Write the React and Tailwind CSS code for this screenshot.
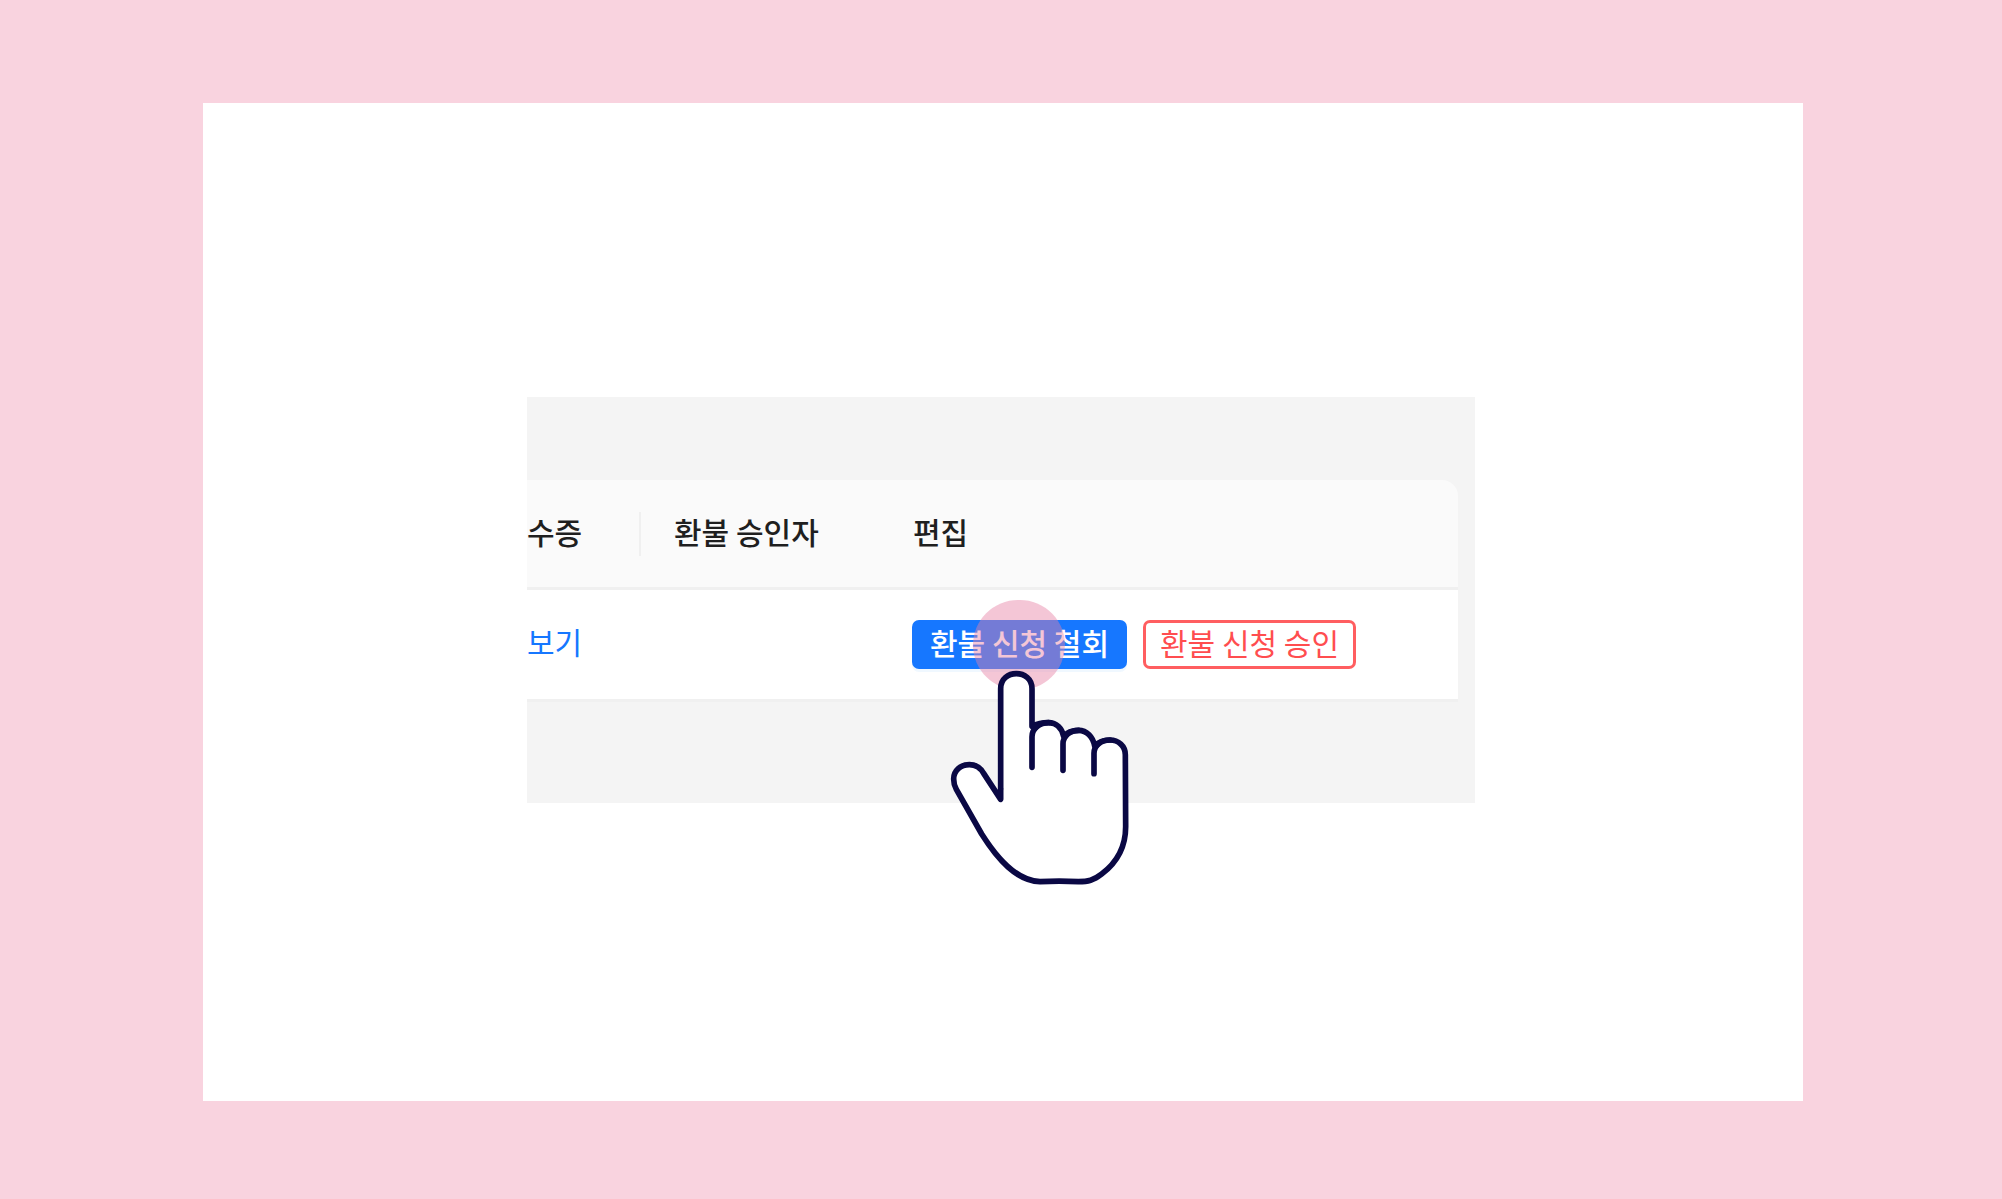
function PointingHand() {
  return (
    <svg
      viewBox="0 0 660 720"
      className="pointer-events-none absolute top-[40px] left-[18px] h-[240px] w-[220px]"
      aria-hidden="true"
    >
      <g stroke="#0a0844" strokeWidth="17" strokeLinecap="round" strokeLinejoin="round">
        <path
          fill="#fff"
          d="M212 418 V86 C212 26 306 26 306 86 V199 C322 191 340 188 356 188 C380 188 396 206 401 229 C412 216 430 211 446 211 C470 211 489 230 494 258 C505 246 522 240 540 240 C565 240 586 258 586 284 L587 500 C587 560 560 608 515 642 C490 661 475 665 445 665 C405 663 370 663 330 665 C260 663 203 598 155 522 L79 388 C72 376 71 366 71 357 C71 332 92 314 118 314 C137 314 152 324 161 340 Z"
        />
        <path fill="none" d="M306 322 V230 C306 205 330 188 356 188" />
        <path fill="none" d="M399 331 V252 C399 228 420 211 446 211" />
        <path fill="none" d="M492 341 V280 C492 257 513 240 540 240" />
      </g>
      <g fill="#0a0844">
        <path d="M306 195 L340 188 L306 228 Z" />
        <path d="M399 225 L430 214 L399 250 Z" />
        <path d="M492 255 L522 243 L492 278 Z" />
        <path d="M206 385 L220 385 L214 420 L200 402 Z" />
      </g>
    </svg>
  );
}

export default function App() {
  return (
    <div className="flex min-h-screen bg-[#f9d3df] pt-[103px] pr-[199px] pb-[98px] pl-[203px] font-['Noto_Sans_CJK_KR',sans-serif]">
      <main className="flex flex-1 items-center justify-center bg-white pr-1 pb-1">
        <section className="w-full max-w-[948px] bg-[#f4f4f4] pt-[83px] pr-[17px] pb-[101px]">
          <table className="w-full table-fixed border-separate border-spacing-0 text-left text-[30px] leading-[38px] whitespace-nowrap">
            <colgroup>
              <col className="w-[114px]" />
              <col className="w-[239px]" />
              <col />
            </colgroup>
            <thead className="text-[#1f1f1f]">
              <tr>
                <th className="border-b-3 border-[#f0f0f0] bg-[#fafafa] pt-8 pb-[31px] font-medium">
                  <div className="border-r-2 border-[#f0f0f0] pb-[6px]">수증</div>
                </th>
                <th className="border-b-3 border-[#f0f0f0] bg-[#fafafa] pt-8 pb-[37px] pl-[33px] font-medium">환불 승인자</th>
                <th className="rounded-tr-[16px] border-b-3 border-[#f0f0f0] bg-[#fafafa] pt-8 pb-[37px] pl-[33px] font-medium">편집</th>
              </tr>
            </thead>
            <tbody>
              <tr>
                <td className="border-b-3 border-[#f0f0f0] bg-white pb-2">
                  <a href="#receipt" className="text-[#1677ff]">보기</a>
                </td>
                <td className="border-b-3 border-[#f0f0f0] bg-white" />
                <td className="border-b-3 border-[#f0f0f0] bg-white py-[30px] pl-8">
                  <div className="relative flex gap-4">
                    <button type="button" className="flex h-[49px] w-[215px] items-center justify-center rounded-[7px] bg-[#1677ff] pb-[6px] font-medium text-white shadow-[0_3px_0_#f0f8ff]">
                      환불 신청 철회
                    </button>
                    <button type="button" className="flex h-[49px] w-[213px] items-center justify-center rounded-[7px] border-3 border-[#ff4d4f]/90 bg-white pb-[6px] text-[#ff4d4f]">
                      환불 신청 승인
                    </button>
                    <span className="pointer-events-none absolute -top-5 left-[61px] h-[90px] w-[92px] rounded-full bg-[#e680a4]/45" />
                    <PointingHand />
                  </div>
                </td>
              </tr>
            </tbody>
          </table>
        </section>
      </main>
    </div>
  );
}
